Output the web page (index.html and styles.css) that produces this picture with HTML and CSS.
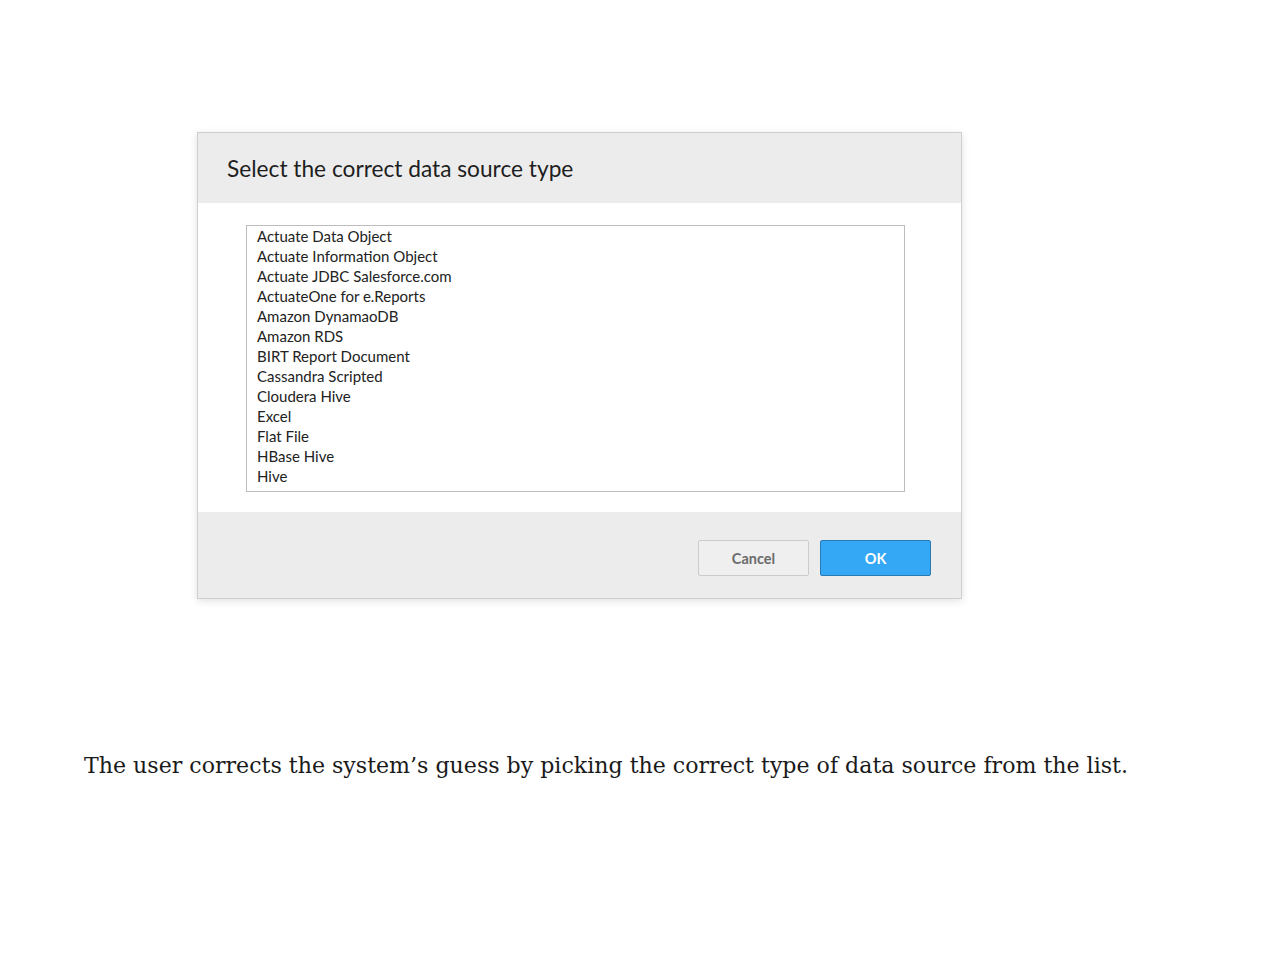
FILE: index.html
```html
<!DOCTYPE html>
<html>
<head>
<meta charset="utf-8">
<link rel="stylesheet" href="styles.css">
</head>
<body>
<div class="page">
  <div class="dialog">
    <div class="dialog-header">Select the correct data source type</div>
    <div class="dialog-body">
      <ul class="listbox">
        <li>Actuate Data Object</li>
        <li>Actuate Information Object</li>
        <li>Actuate JDBC Salesforce.com</li>
        <li>ActuateOne for e.Reports</li>
        <li>Amazon DynamaoDB</li>
        <li>Amazon RDS</li>
        <li>BIRT Report Document</li>
        <li>Cassandra Scripted</li>
        <li>Cloudera Hive</li>
        <li>Excel</li>
        <li>Flat File</li>
        <li>HBase Hive</li>
        <li>Hive</li>
      </ul>
    </div>
    <div class="dialog-footer">
      <button class="btn btn-cancel">Cancel</button>
      <button class="btn btn-ok">OK</button>
    </div>
  </div>
  <p class="caption">The user corrects the system’s guess by picking the correct type of data source from the list.</p>
</div>
</body>
</html>
```
FILE: styles.css
```css
html, body {
  margin: 0;
  padding: 0;
  background: #ffffff;
}
.page {
  padding-top: 132px;
  display: flex;
  flex-direction: column;
}
.dialog {
  margin-left: 197px;
  width: 763px;
  border: 1px solid #cfcfcf;
  box-shadow: 0 2px 8px rgba(0,0,0,0.12);
  font-family: "Lato", "Open Sans", sans-serif;
  background: #fff;
}
.dialog-header {
  background: #ececec;
  height: 70px;
  box-sizing: border-box;
  padding-left: 29px;
  display: flex;
  align-items: center;
  font-size: 22.7px;
  color: #1e1e1e;
  padding-top: 0;
}
.dialog-body {
  background: #fff;
  padding: 22px 56px 20px 48px;
}
.listbox {
  list-style: none;
  margin: 0;
  padding: 0 0 5px 10px;
  border: 1px solid #bdbdbd;
  font-size: 15px;
  color: #222;
}
.listbox li {
  height: 20px;
  line-height: 20px;
}
.dialog-footer {
  background: #ececec;
  height: 86px;
  box-sizing: border-box;
  display: flex;
  justify-content: flex-end;
  align-items: center;
  gap: 11px;
  padding-right: 30px;
  padding-top: 6px;
}
.btn {
  width: 111px;
  height: 36px;
  border-radius: 2px;
  font-family: "Lato", "Open Sans", sans-serif;
  font-size: 14.5px;
  font-weight: bold;
  cursor: pointer;
}
.btn-cancel {
  background: #efefef;
  border: 1px solid #cccccc;
  color: #6b6b6b;
}
.btn-ok {
  background: #34a7f5;
  border: 1px solid #2b79b3;
  color: #ffffff;
}
.caption {
  margin: 151px 0 0 84px;
  font-family: "DejaVu Serif", serif;
  font-size: 22.1px;
  color: #1a1a1a;
  line-height: 30px;
}
```
